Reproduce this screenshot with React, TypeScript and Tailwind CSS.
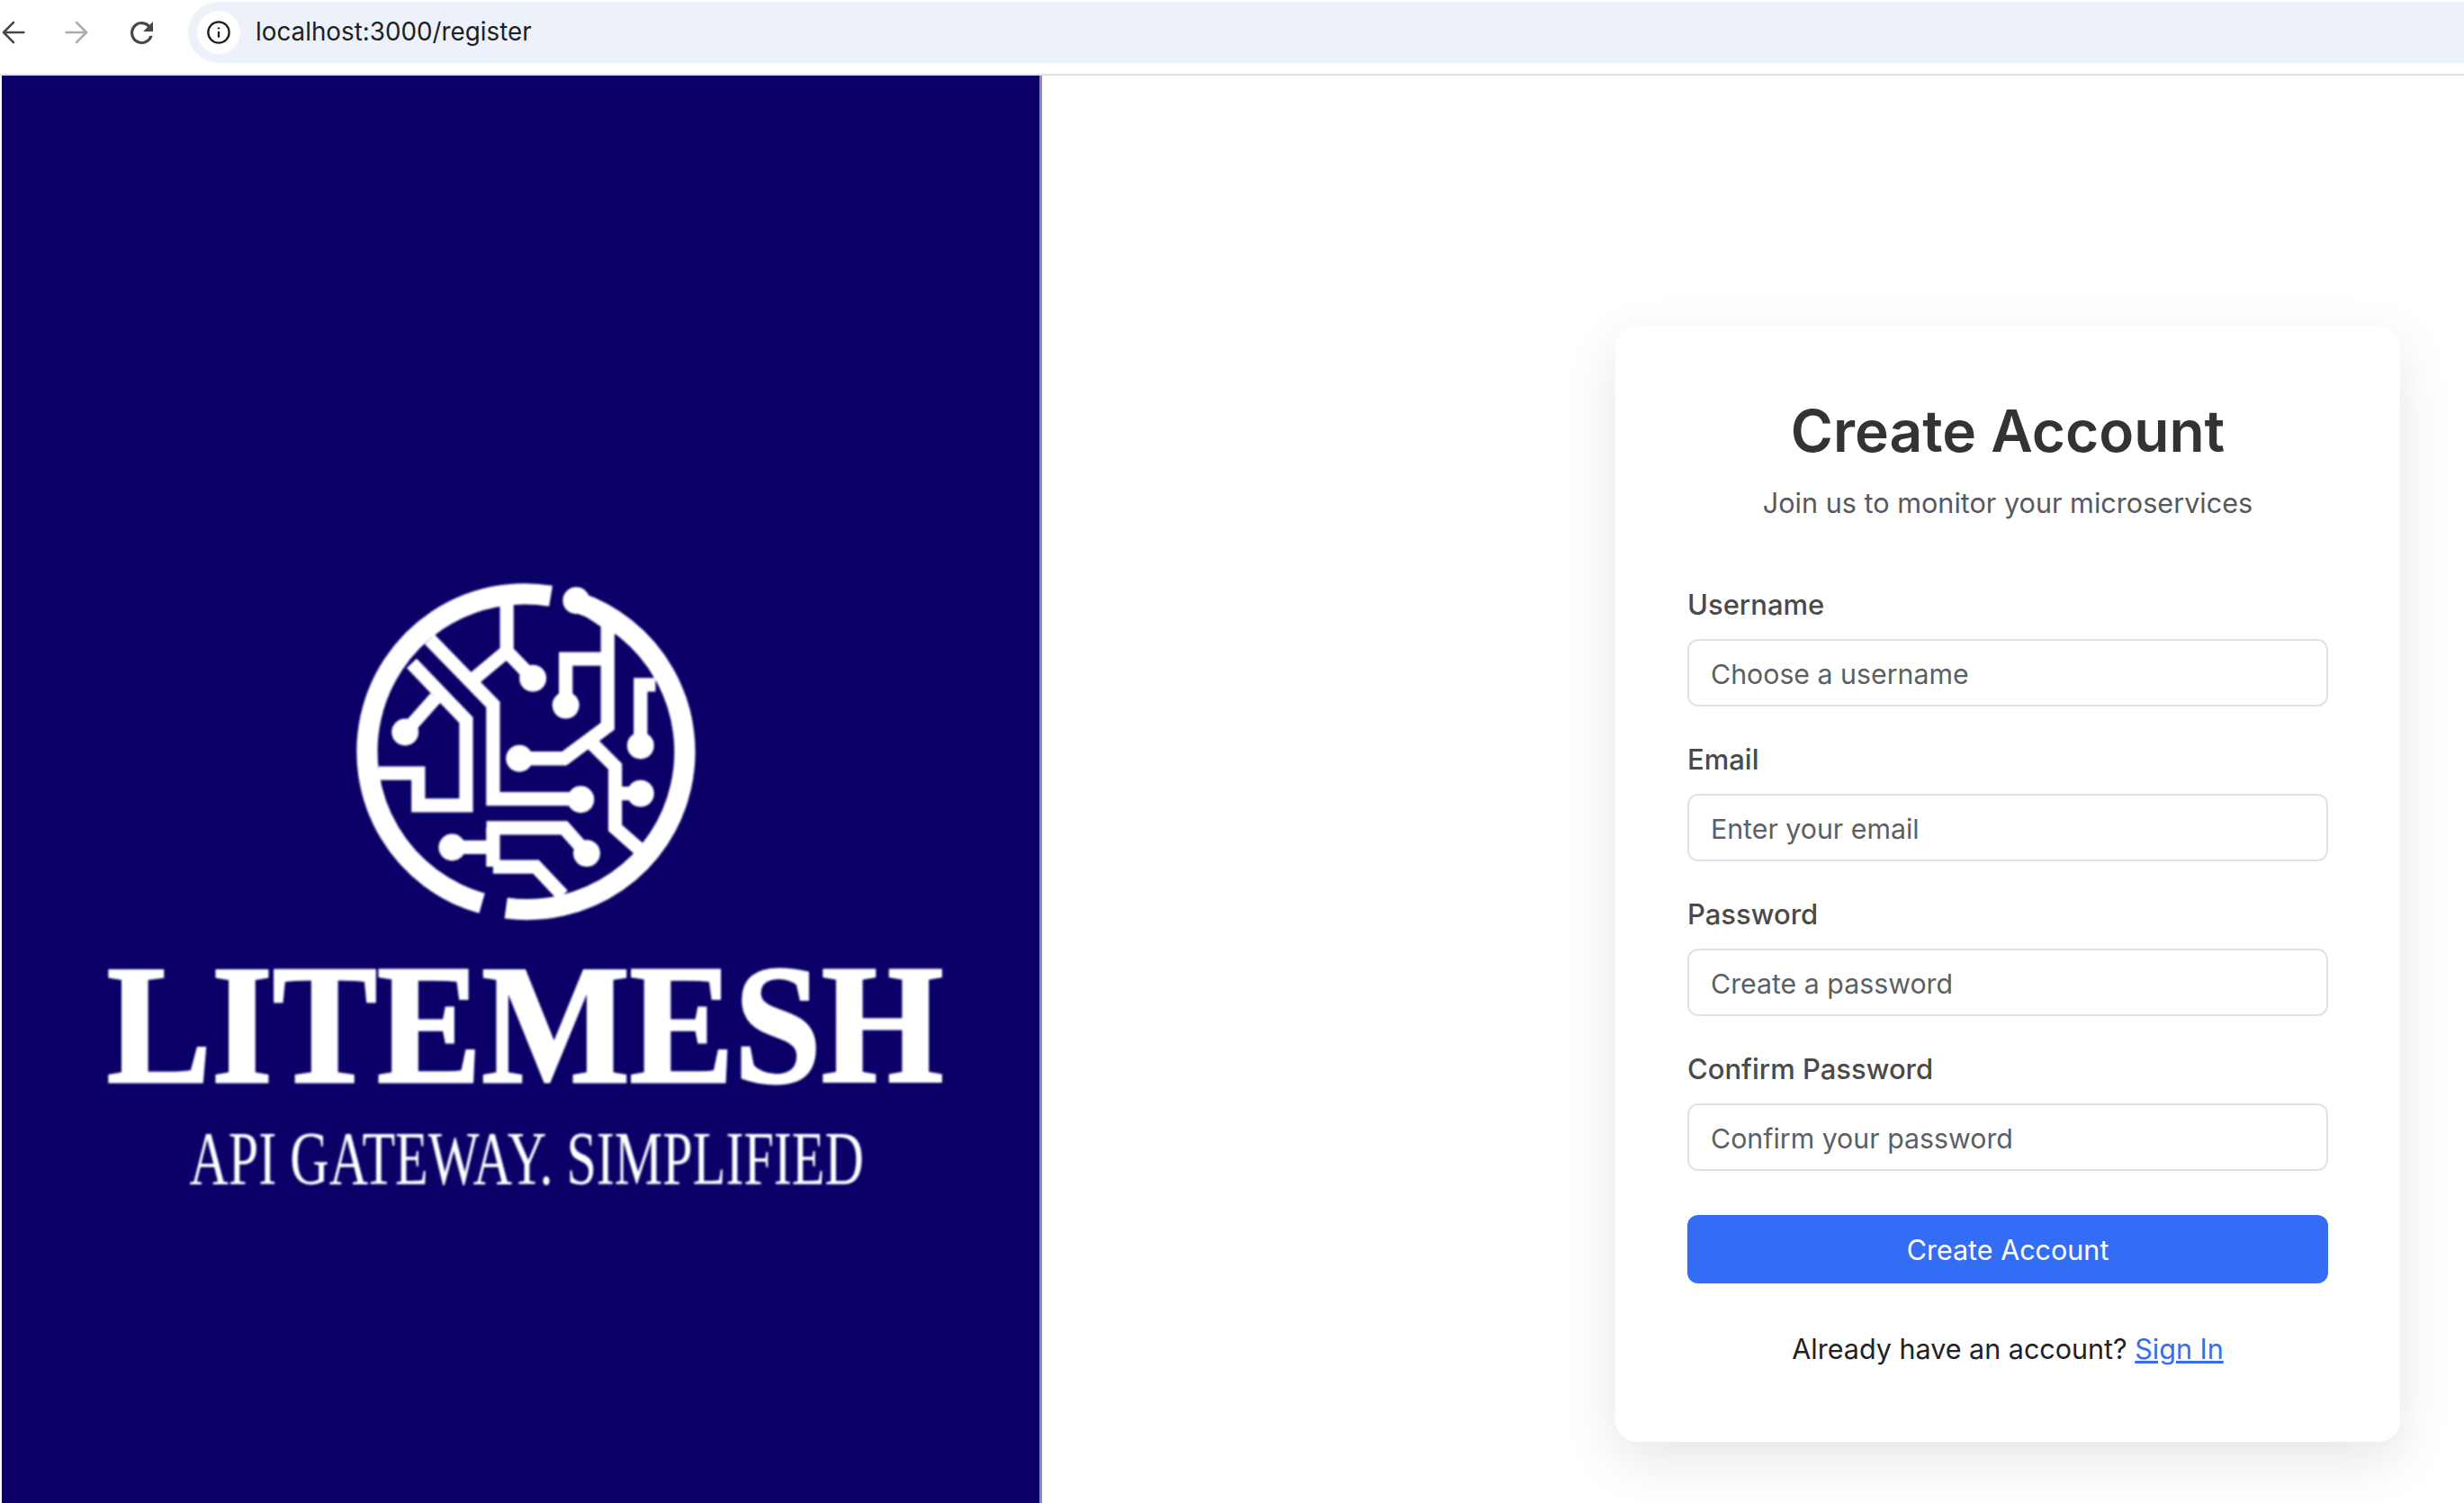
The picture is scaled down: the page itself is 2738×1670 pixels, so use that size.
import { Info } from 'lucide-react'

const font = 'font-["Inter",sans-serif]'

function BackIcon({ className }: { className: string }) {
  return (
    <svg viewBox="0 0 24 24" className={className} fill="none" stroke="currentColor" strokeWidth="2.4" strokeLinecap="round" strokeLinejoin="round">
      <path d="M22.5 12H2M12 1.8 1.8 12 12 22.2" />
    </svg>
  )
}

function ForwardIcon({ className }: { className: string }) {
  return (
    <svg viewBox="0 0 24 24" className={className} fill="none" stroke="currentColor" strokeWidth="2.4" strokeLinecap="round" strokeLinejoin="round">
      <path d="M1.5 12H22M12 1.8 22.2 12 12 22.2" />
    </svg>
  )
}

function ReloadIcon({ className }: { className: string }) {
  return (
    <svg viewBox="4 4 16 16" className={className} fill="currentColor">
      <path d="M17.65 6.35A7.95 7.95 0 0 0 12 4a8 8 0 1 0 7.73 10h-2.08A6 6 0 1 1 12 6c1.66 0 3.14.69 4.22 1.78L13 11h7V4l-2.35 2.35z" />
    </svg>
  )
}

// logo drawn in the panel's own pixels, slightly blurred like the upscaled image
function Logo() {
  const dots = [
    [665, 400], [238, 580], [775, 490], [620, 668], [1025, 625],
    [825, 805], [1025, 785], [395, 965], [845, 985], [810, 140],
  ]
  return (
    <svg viewBox="0 0 1156 1586" className="h-full w-full blur-[1px]">
      <g transform="translate(370 536) scale(0.3333)" fill="none" stroke="#fff" strokeWidth="46" strokeLinejoin="miter">
        <path d="M495 1152A527 527 0 0 1 725 125" strokeWidth="70" />
        <path d="M810 145A527 527 0 0 1 575 1168" strokeWidth="70" />
        <path d="M578 150V310L665 400M578 310 470 400" />
        <path d="M320 270 532 488V803H825" />
        <path d="M260 350 442 540V825H282V717H150" />
        <path d="M340 465 238 580" />
        <path d="M775 490V335H915" />
        <path d="M810 145 915 215V560L770 668H620" />
        <path d="M1075 422H1025V625" />
        <path d="M865 620 940 695V900L1025 975" />
        <path d="M940 785H1025" />
        <path d="M395 965H532M532 900V1030" />
        <path d="M510 900H770L845 985" />
        <path d="M532 1030H675L765 1125" />
        {dots.map(([x, y]) => (
          <circle key={`${x}-${y}`} cx={x} cy={y} r="45" fill="#fff" stroke="none" />
        ))}
      </g>
      <text x="117" y="1119" fill="#fff" stroke="#fff" strokeWidth="3" fontFamily="Liberation Serif, serif" fontWeight="700" fontSize="190" textLength="932" lengthAdjust="spacingAndGlyphs">
        LITEMESH
      </text>
      <text transform="translate(209 1233) scale(0.68 1)" fill="#fff" fontFamily="Liberation Serif, serif" fontSize="84" textLength="1105" lengthAdjust="spacingAndGlyphs">
        API GATEWAY. SIMPLIFIED
      </text>
    </svg>
  )
}

function Field({ label, placeholder }: { label: string; placeholder: string }) {
  return (
    <div className="flex flex-col">
      <label className="mb-[16px] text-[31px] leading-[44px] font-medium text-[#4a4a4a]">{label}</label>
      <input
        placeholder={placeholder}
        className="h-[75px] w-full rounded-[12px] border-2 border-[#dfe3e8] bg-white px-6 pt-[2px] text-[30.3px] placeholder:text-[#5c5f63] outline-none"
      />
    </div>
  )
}

export default function App() {
  return (
    <div className={`flex h-[1670px] w-[2738px] flex-col overflow-hidden bg-white ${font}`}>
      <header className="flex h-[84px] shrink-0 items-start border-b-2 border-[#e0e0e0] pt-[2px]">
        <div className="flex h-[68px] items-center gap-[44px] pl-[2px]">
          <BackIcon className="h-[26px] w-[26px] text-[#474747]" />
          <ForwardIcon className="h-[26px] w-[26px] text-[#ababab]" />
          <ReloadIcon className="ml-[3px] h-[25px] w-[25px] text-[#474747]" />
        </div>
        <div className="ml-[39px] flex h-[68px] flex-1 items-center rounded-l-full bg-[#edf2fa] pl-[10px]">
          <div className="flex h-[48px] w-[48px] items-center justify-center rounded-full bg-white">
            <Info className="h-[28px] w-[28px] text-[#1f1f1f]" strokeWidth={2} />
          </div>
          <span className="ml-[17px] text-[27.8px] text-[#1f1f1f]">localhost:3000/register</span>
        </div>
      </header>

      <main className="flex flex-1">
        <div className="ml-[2px] w-[1156px] border-r-[3px] border-[#8f8cc4] bg-[#0b0068]">
          <Logo />
        </div>

        <div className="flex flex-1 items-start justify-end pt-[278px] pr-[71px]">
          <div className="h-[1240px] w-[872px] rounded-[24px] bg-white px-[80px] pt-[81px] shadow-[0_20px_60px_rgba(0,0,0,0.1)]">
            <h1 className="text-center text-[64px] leading-[72px] font-semibold text-[#333333]">Create Account</h1>
            <p className="mt-[22px] text-center text-[30.6px] leading-[44px] text-[#555a60]">
              Join us to monitor your microservices
            </p>
            <form className="mt-[69px] flex flex-col gap-[37px]">
              <Field label="Username" placeholder="Choose a username" />
              <Field label="Email" placeholder="Enter your email" />
              <Field label="Password" placeholder="Create a password" />
              <Field label="Confirm Password" placeholder="Confirm your password" />
            </form>
            <button className="mt-[49px] h-[76px] w-full rounded-[12px] bg-[#346df5] pt-[2px] text-[30.5px] text-white">
              Create Account
            </button>
            <p className="mt-[51px] text-center text-[30.5px] leading-[44px] text-[#222222]">
              Already have an account?{' '}
              <a href="#" className="text-[#346df5] underline">Sign In</a>
            </p>
          </div>
        </div>
      </main>
    </div>
  )
}
